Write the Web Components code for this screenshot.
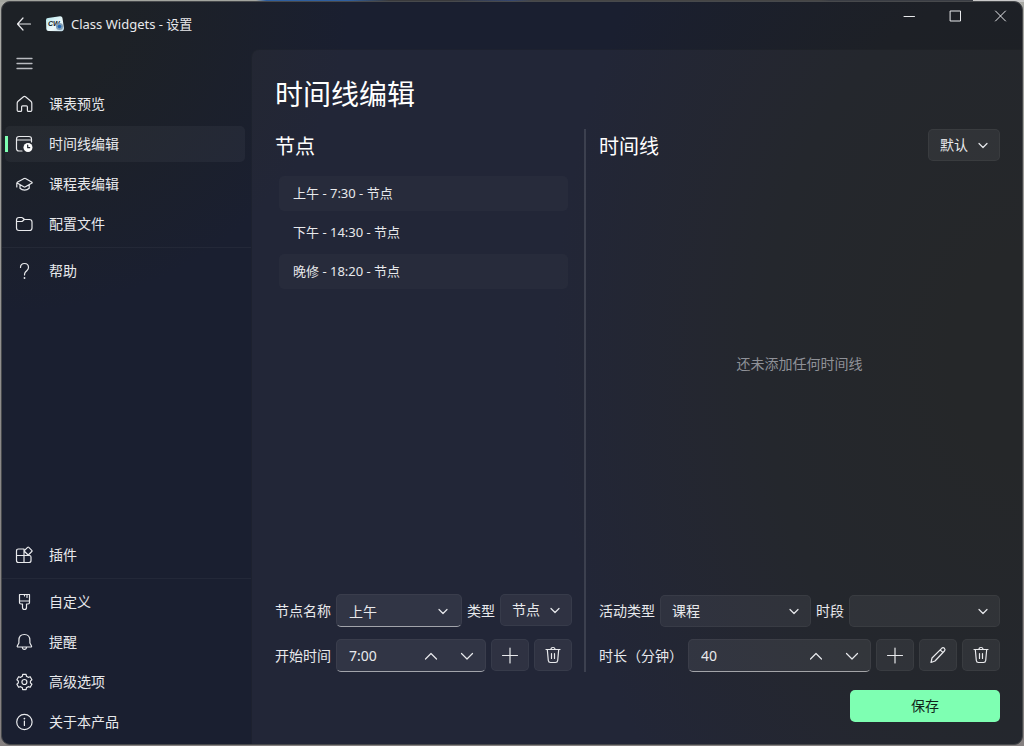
<!DOCTYPE html>
<html lang="zh-CN">
<head>
<meta charset="utf-8">
<title>Class Widgets - 设置</title>
<style>
    :root {
        --accent: #7effb2;
        --control: rgba(255,255,255,.06);
        --line: rgba(255,255,255,.045);
        --text: #e8e9ec;
    }
    body {
        margin: 0;
        padding: 1px;
        box-sizing: border-box;
        min-height: 100vh;
        display: grid;
        font: 14px/20px "Noto Sans", "Noto Sans CJK SC", sans-serif;
        color: var(--text);
        background:
            linear-gradient(90deg, #a3a59f 0 25%, #2f5f9f 26% 34%, #3a3a3c 38% 44%, #34466f 50%, #454545 52% 80%, #3a3d44 81% 95%, #c9c9c9 95%) top / 100% 2px no-repeat,
            linear-gradient(#a9aaa5, #8b8988 60%, #858080);
    }
</style>
</head>
<body>
<settings-window heading="Class Widgets - 设置">
    <side-nav slot="nav">
        <nav-item icon="home">课表预览</nav-item>
        <nav-item icon="timeline" selected>时间线编辑</nav-item>
        <nav-item icon="hat">课程表编辑</nav-item>
        <nav-item icon="folder">配置文件</nav-item>
        <nav-separator></nav-separator>
        <nav-item icon="help">帮助</nav-item>
        <nav-item slot="bottom" icon="apps">插件</nav-item>
        <nav-separator slot="bottom"></nav-separator>
        <nav-item slot="bottom" icon="brush">自定义</nav-item>
        <nav-item slot="bottom" icon="bell">提醒</nav-item>
        <nav-item slot="bottom" icon="gear">高级选项</nav-item>
        <nav-item slot="bottom" icon="info">关于本产品</nav-item>
    </side-nav>
    <timeline-page></timeline-page>
</settings-window>

<script>
const ICONS = {
    back: '<path d="M15.5 9H2.5M8 3 2.5 9 8 15"/>',
    menu: '<path d="M2 3.500h15M2 8.500h15M2 13.500h15" stroke-width="1.300"/>',
    home: '<path d="M2.200 8.200q0-1.200.9-2L8.500 1.700q1-.8 2 0l5.400 4.500q.9.800.9 2v7q0 1.200-1.200 1.200h-2.200q-1 0-1-1v-3.600q0-1-1-1H7.600q-1 0-1 1v3.600q0 1-1 1H3.400q-1.200 0-1.200-1.200z"/>',
    timeline: '<path d="M16.500 7V4q0-2.500-2.500-2.500H4Q1.500 1.500 1.500 4v9.500Q1.500 16 4 16h3M1.500 5h15"/><circle cx="13" cy="12.500" r="4.500" fill="#fff" stroke="none"/><path d="M12.700 10v2.700h2" stroke="#20252d"/>',
    hat: '<path d="M9.500 3.500q.5-.2 1 .1L17 7.300q.4.400 0 .7l-6.500 3.800q-.9.500-1.800 0L2.200 8q-.4-.3 0-.7l6.500-3.600zM1.800 8v4M5 10v3.200q2 1.900 4.600 1.900t4.600-1.900V10"/>',
    folder: '<path d="M1.500 5q0-2.500 2.500-2.500h2.600q.7 0 1.200.5l1.700 1.500h5Q17 4.500 17 7v6q0 2.500-2.500 2.500H4q-2.500 0-2.500-2.500zM1.500 6.500h5q.7 0 1.200-.5l1.600-1.500"/>',
    help: '<path d="M5.500 5.500q0-4 4-4t4 4q0 1.700-1.500 3L10.500 10q-1 1-1 3"/><circle cx="9.500" cy="16" r=".9" fill="currentColor" stroke="none"/>',
    apps: '<path d="M9 3H3.500q-2 0-2 2v9.500q0 2 2 2h10.500q2 0 2-2V11q0-1.500-1.500-1.500h-13M9 3v13.500M12.600 1.300q.6-.6 1.200 0l3 3q.6.600 0 1.200l-3 3q-.6.600-1.200 0l-3-3q-.6-.6 0-1.200z"/>',
    brush: '<path d="M4.500 1.500h10v8q0 1.500-1.500 1.500h-1.500v3.500q0 2-2 2t-2-2V11H6q-1.500 0-1.500-1.500zM4.500 8h10M9.500 1.500V3M12 1.500v3"/>',
    bell: '<path d="M3.900 7.500q0-6 5.500-6t5.500 6V10l1.600 3q.4 1-.7 1H3q-1.100 0-.7-1l1.600-3zM7.200 14q.3 2.400 2.200 2.400t2.200-2.400"/>',
    gear: '<path d="m7.700 1.400-.4 2q-1 .3-1.700 1l-2-.7-1.700 3 1.500 1.400q-.2.900 0 1.800l-1.500 1.400 1.700 3 2-.7q.8.700 1.700 1l.4 2h3.400l.4-2q1-.3 1.700-1l2 .7 1.700-3-1.500-1.400q.2-.9 0-1.800l1.500-1.400-1.700-3-2 .7q-.8-.7-1.700-1l-.4-2z"/><circle cx="9.400" cy="9" r="2.500"/>',
    info: '<circle cx="9.400" cy="9" r="7.700"/><path d="M9.400 8v4.500"/><circle cx="9.400" cy="5.600" r=".9" fill="currentColor" stroke="none"/>',
    min: '<path d="M4 9.500h10.500" stroke-width="1"/>',
    max: '<path d="M4.500 4h10v10h-10z" stroke-width="1"/>',
    close: '<path d="m4.500 4 10 10m0-10-10 10" stroke-width="1"/>',
    chevron: '<path d="M5 7.500 9 11.500 13 7.500"/>',
    down: '<path d="m3.500 6.500 5.500 5.500 5.500-5.500"/>',
    up: '<path d="m3.500 12 5.500-5.500 5.500 5.500"/>',
    plus: '<path d="M9 2v15M1.500 9.500h15"/>',
    edit: '<path d="m2 16.500 1-4.500L12.700 2.300q1.300-1.200 2.700 0 1.300 1.400 0 2.700L6 15zM11.200 3.900l2.800 2.800"/>',
    trash: '<path d="M2 3.500h14M7 3.500q0-2 2-2t2 2M3.300 3.500l1 11q.2 2 2.200 2h5q2 0 2.200-2l1-11M7.500 7.500v5M10.500 7.500v5"/>',
};

// shared plumbing: each element only supplies its markup and styles
class Base extends HTMLElement {
    connectedCallback() {
        if( this.shadowRoot ) return;
        this.attachShadow( { mode: 'open' } );
        const template = document.createElement( 'template' );
        template.innerHTML = `
            <style>
                *, :host { box-sizing: border-box; }
                button, input, select { font: inherit; color: inherit; margin: 0; }
                ${this.styles()}
            </style>
            ${this.markup()}
        `;
        this.shadowRoot.appendChild( template.content.cloneNode( true ) );
    }
    attr( name ) { return this.getAttribute( name ) || ''; }
}

class UiIcon extends Base {
    styles() {
        return `
            :host { display: block; width: 18px; height: 18px; flex: none; pointer-events: none; }
            svg { display: block; fill: none; stroke: currentColor; stroke-linecap: round; stroke-linejoin: round; }
        `;
    }
    markup() {
        return `<svg width="18" height="18" viewBox="0 0 18 18" stroke-width="1.2" aria-hidden="true">${ICONS[ this.attr( 'name' ) ]}</svg>`;
    }
}

class AppLogo extends Base {
    styles() { return `:host { display: block; width: 18px; height: 16px; } svg { display: block; }`; }
    markup() {
        return `
            <svg width="18" height="16" viewBox="0 0 18 16" aria-hidden="true">
                <defs>
                    <linearGradient id="g" x2="1" y2="1">
                        <stop stop-color="#b4e8f0"/><stop offset=".6" stop-color="#eefafa"/><stop offset="1" stop-color="#b9d5e2"/>
                    </linearGradient>
                </defs>
                <path d="M0 4q0-2 2-2L14 .2q2-.2 2.400 1.600L18 12q0 3-2.500 3.200L2.500 15Q.5 15 .3 13z" fill="url(#g)"/>
                <text x="2" y="10" font-family="Liberation Sans" font-size="7" font-weight="700" font-style="italic" fill="#16232b">CW</text>
                <circle cx="13.500" cy="10.500" r="3.500" fill="#7f9db5"/>
                <circle cx="13.500" cy="10.500" r="1.800" fill="#2469b4"/>
            </svg>
        `;
    }
}

class SettingsWindow extends Base {
    styles() {
        return `
            :host {
                display: grid;
                grid-template: 44px 1fr / 249px minmax(0, 1fr);
                overflow: hidden;
                border: 1px solid #47494c;
                border-radius: 9px;
                background:
                    radial-gradient(ellipse 34% 42% at 0 0, #1d2126 35%, transparent),
                    radial-gradient(ellipse 46% 90% at 100% 48%, #1e2022 15%, #1d2026 55%, transparent),
                    #1a1f30;
            }
            header { grid-column: 1 / -1; display: flex; align-items: center; }
            header button { border: 0; background: none; padding: 0; display: grid; place-items: center; }
            .back { width: 44px; height: 36px; }
            h1 { flex: 1; margin: 0; padding-left: 7px; font-size: 13px; line-height: 20px; font-weight: 400; }
            .controls { display: grid; grid-template-columns: 46px 46px 44px; height: 28px; align-self: start; }
            main {
                margin: 3px 0 0;
                display: grid;
                border: 1px solid rgba(0,0,0,.12);
                border-width: 1px 0 0 1px;
                border-radius: 8px 0 0 0;
                background: rgba(255,255,255,.034);
            }
        `;
    }
    markup() {
        return `
            <header>
                <button class="back" aria-label="返回"><ui-icon name="back"></ui-icon></button>
                <app-logo></app-logo>
                <h1>${this.attr( 'heading' )}</h1>
                <div class="controls">
                    <button aria-label="最小化"><ui-icon name="min"></ui-icon></button>
                    <button aria-label="最大化"><ui-icon name="max"></ui-icon></button>
                    <button aria-label="关闭"><ui-icon name="close"></ui-icon></button>
                </div>
            </header>
            <slot name="nav"></slot>
            <main><slot></slot></main>
        `;
    }
}

class SideNav extends Base {
    styles() {
        return `
            :host, nav, div { display: flex; flex-direction: column; }
            nav { flex: 1; justify-content: space-between; padding-bottom: 4px; }
            div { gap: 4px; }
            button { width: 44px; height: 36px; padding: 0; border: 0; background: none; display: grid; place-items: center; color: #b9bbc0; }
        `;
    }
    markup() {
        return `
            <nav>
                <div><button aria-label="菜单"><ui-icon name="menu"></ui-icon></button><slot></slot></div>
                <div><slot name="bottom"></slot></div>
            </nav>
        `;
    }
}

class NavItem extends Base {
    styles() {
        return `
            :host { display: block; margin: 0 6px 0 3px; }
            a {
                display: flex;
                align-items: center;
                gap: 16px;
                height: 36px;
                padding-left: 10px;
                border-radius: 5px;
                line-height: 38px;
                color: inherit;
                text-decoration: none;
            }
            :host([selected]) a {
                background: linear-gradient(var(--accent), var(--accent)) 0 50% / 3px 16px no-repeat, rgba(255,255,255,.045);
            }
        `;
    }
    markup() {
        return `<a href="#"><ui-icon name="${this.attr( 'icon' )}"></ui-icon><span><slot></slot></span></a>`;
    }
}

class NavSeparator extends Base {
    styles() { return `:host { display: block; height: 3px; padding: 1px 0; } div { height: 1px; background: var(--line); }`; }
    markup() { return `<div></div>`; }
}

class IconButton extends Base {
    styles() {
        return `
            :host { display: block; align-self: flex-start; }
            button {
                display: grid;
                place-items: center;
                width: 38px;
                height: 32px;
                padding: 0;
                border: 1px solid var(--line);
                border-radius: 5px;
                background: var(--control);
            }
        `;
    }
    markup() {
        return `<button aria-label="${this.attr( 'label' )}"><ui-icon name="${this.attr( 'icon' )}"></ui-icon></button>`;
    }
}

// drop-down with its label in front
class SelectField extends Base {
    styles() {
        return `
            :host { display: flex; align-items: center; gap: 5px; }
            .box { flex: 1; display: grid; align-items: center; align-self: flex-start; }
            :host([compact]) .box { flex: none; width: 72px; }
            label { white-space: nowrap; }
            select, ui-icon { grid-area: 1 / 1; }
            ui-icon { justify-self: end; margin-right: 8px; }
            select {
                appearance: none;
                width: 0;
                min-width: 100%;
                height: 32px;
                padding: 0 28px 0 11px;
                border: 1px solid var(--line);
                border-radius: 5px;
                background: var(--control);
            }
            option { color: #222; }
        `;
    }
    markup() {
        const label = this.attr( 'label' );
        const options = this.attr( 'options' ).split( ',' ).map( o => `<option>${o}</option>` ).join( '' );
        return `
            ${label ? `<label for="field">${label}</label>` : ''}
            <div class="box">
                <select id="field" ${label ? '' : `aria-label="${this.attr( 'name' )}"`}>${options}</select>
                <ui-icon name="chevron"></ui-icon>
            </div>
        `;
    }
}

// text box with its label in front and small buttons at its end
class InputField extends Base {
    styles() {
        return `
            :host { display: flex; flex: 1; min-width: 0; align-items: center; gap: 5px; }
            label { white-space: nowrap; }
            .box {
                flex: 1;
                min-width: 0;
                height: 33px;
                display: flex;
                align-items: center;
                gap: 5px;
                padding-right: 3px;
                border: 1px solid var(--line);
                border-bottom-color: rgba(255,255,255,.55);
                border-radius: 5px;
                background: rgba(255,255,255,.07);
            }
            input { flex: 1; min-width: 0; height: 28px; padding: 0 0 0 12px; border: 0; outline: 0; background: none; }
            button { width: 31px; height: 24px; padding: 0; border: 0; background: none; display: grid; place-items: center; }
        `;
    }
    markup() {
        const buttons = this.hasAttribute( 'spin' )
            ? `<button aria-label="增加"><ui-icon name="up"></ui-icon></button><button aria-label="减少"><ui-icon name="down"></ui-icon></button>`
            : `<button aria-label="展开"><ui-icon name="chevron"></ui-icon></button>`;
        return `
            <label for="field">${this.attr( 'label' )}</label>
            <div class="box"><input id="field" value="${this.attr( 'value' )}">${buttons}</div>
        `;
    }
}

class NodeList extends Base {
    styles() {
        return `
            :host { display: block; }
            ul { list-style: none; margin: 0; padding: 0 4px; display: grid; gap: 4px; }
            li { height: 35px; padding: 0 14px; border-radius: 5px; font-size: 13px; line-height: 35px; }
            li:nth-child(odd) { background: rgba(255,255,255,.022); }
        `;
    }
    markup() {
        return `<ul>${this.attr( 'items' ).split( ',' ).map( i => `<li>${i}</li>` ).join( '' )}</ul>`;
    }
}

class TimelinePage extends Base {
    styles() {
        return `
            :host { display: flex; flex-direction: column; padding: 23px 22px 22px 23px; }
            h2, h3 { margin: 0; font-weight: 400; color: #fff; }
            h2 { font-size: 28px; line-height: 42px; margin-bottom: 14px; }
            h3 { font-size: 20px; line-height: 36px; }
            .columns { flex: 1; display: grid; grid-template-columns: 297fr 3px 401fr; column-gap: 12px; }
            .divider { border-left: 2px solid rgba(255,255,255,.12); }
            section { min-width: 0; display: flex; flex-direction: column; }
            .head { display: flex; justify-content: space-between; height: 32px; }
            node-list { flex: 1; padding-top: 15px; }
            .empty { flex: 1; margin: 0; padding-bottom: 28px; display: grid; place-items: center; color: #8f9198; }
            .row { display: flex; gap: 5px; }
            .row + .row { margin-top: 12px; }
            .row select-field:not([compact]) { flex: 1 1 auto; }
            .save {
                align-self: flex-end;
                width: 150px;
                height: 32px;
                margin-top: 18px;
                padding: 0;
                border: 0;
                border-radius: 5px;
                background: var(--accent);
                color: #10231a;
            }
        `;
    }
    markup() {
        return `
            <h2>时间线编辑</h2>
            <div class="columns">
                <section>
                    <div class="head"><h3>节点</h3></div>
                    <node-list items="上午 - 7:30 - 节点,下午 - 14:30 - 节点,晚修 - 18:20 - 节点"></node-list>
                    <div class="row">
                        <input-field label="节点名称" value="上午"></input-field>
                        <select-field compact label="类型" options="节点"></select-field>
                    </div>
                    <div class="row">
                        <input-field spin label="开始时间" value="7:00"></input-field>
                        <icon-button icon="plus" label="添加节点"></icon-button>
                        <icon-button icon="trash" label="删除节点"></icon-button>
                    </div>
                </section>
                <div class="divider"></div>
                <section>
                    <div class="head"><h3>时间线</h3><select-field compact name="时间线" options="默认"></select-field></div>
                    <p class="empty">还未添加任何时间线</p>
                    <div class="row">
                        <select-field label="活动类型" options="课程"></select-field>
                        <select-field label="时段" options=""></select-field>
                    </div>
                    <div class="row">
                        <input-field spin label="时长（分钟）" value="40"></input-field>
                        <icon-button icon="plus" label="添加"></icon-button>
                        <icon-button icon="edit" label="编辑"></icon-button>
                        <icon-button icon="trash" label="删除"></icon-button>
                    </div>
                </section>
            </div>
            <button class="save">保存</button>
        `;
    }
}

customElements.define( 'ui-icon', UiIcon );
customElements.define( 'app-logo', AppLogo );
customElements.define( 'settings-window', SettingsWindow );
customElements.define( 'side-nav', SideNav );
customElements.define( 'nav-item', NavItem );
customElements.define( 'nav-separator', NavSeparator );
customElements.define( 'icon-button', IconButton );
customElements.define( 'select-field', SelectField );
customElements.define( 'input-field', InputField );
customElements.define( 'node-list', NodeList );
customElements.define( 'timeline-page', TimelinePage );
</script>
</body>
</html>
